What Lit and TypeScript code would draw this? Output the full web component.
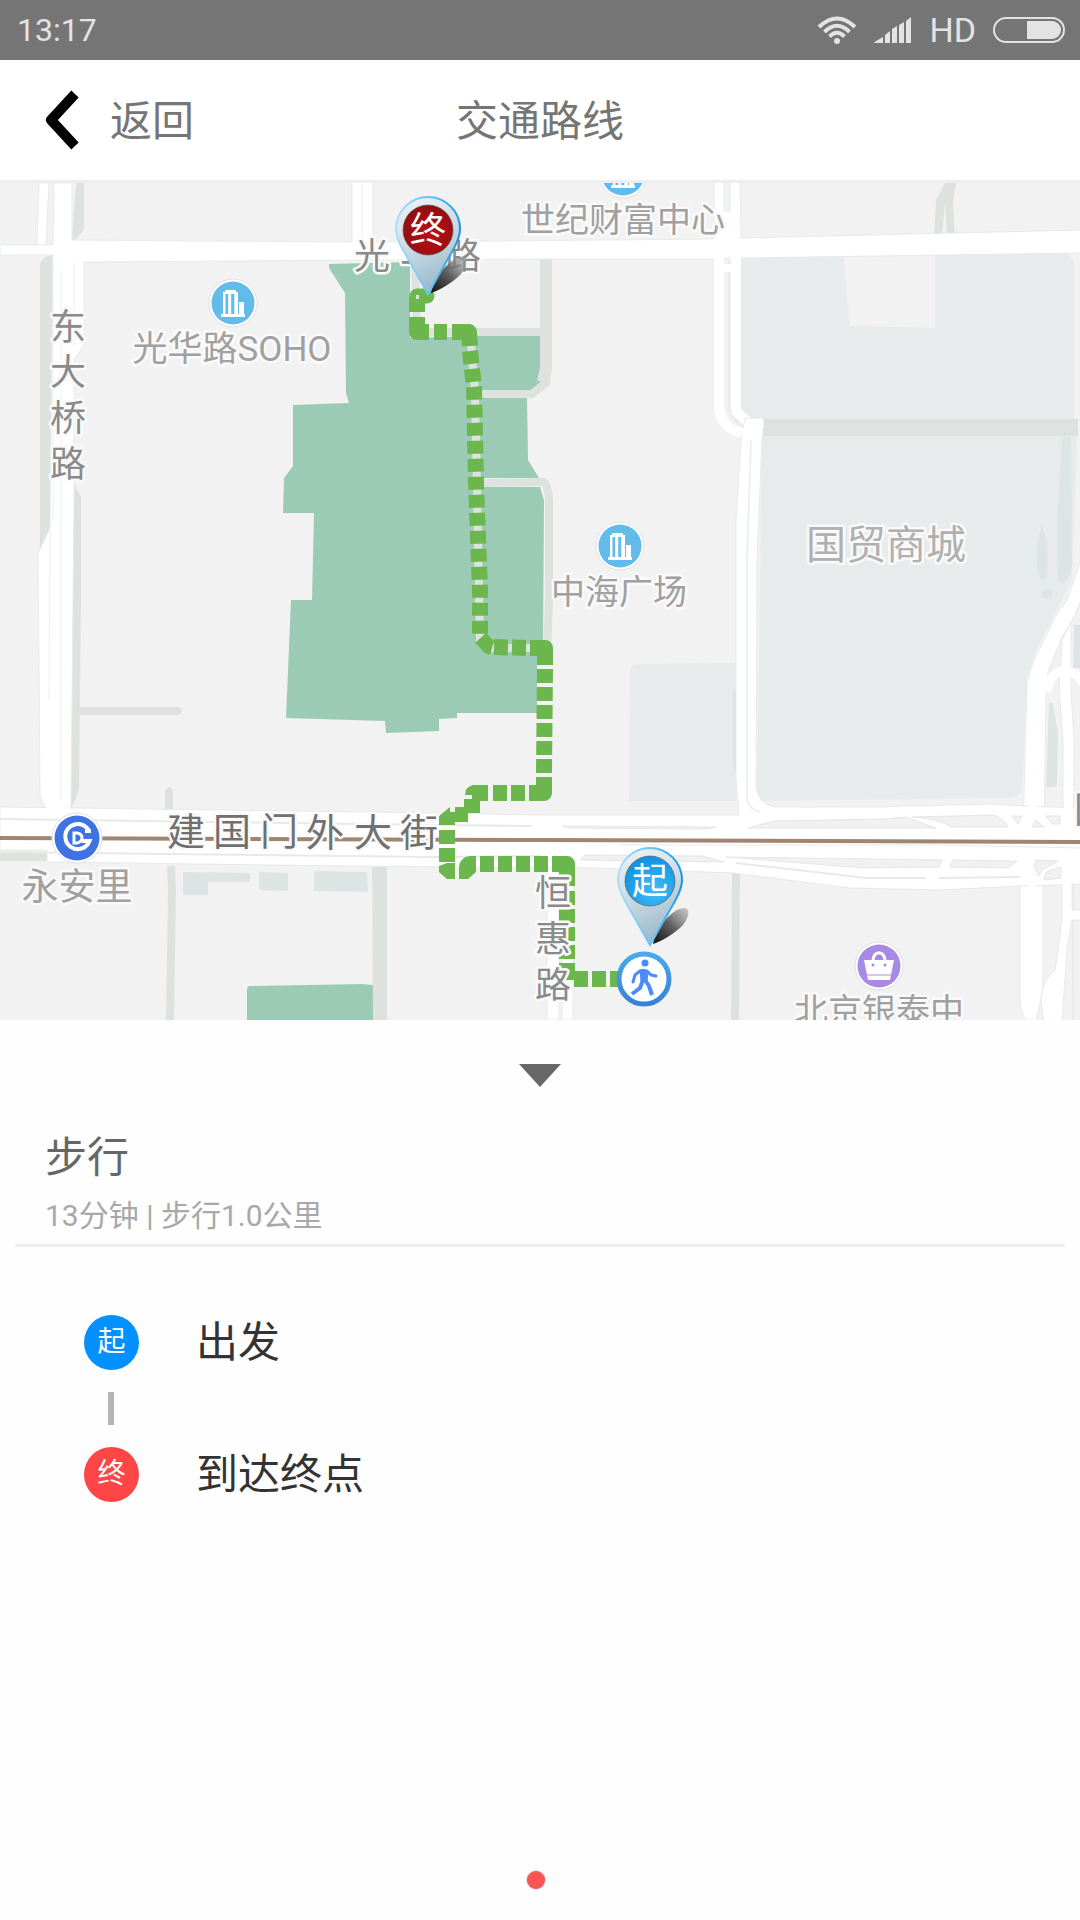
import { LitElement, html, svg, css } from "lit";
import { customElement, property } from "lit/decorators.js";

interface Glyph {
  char: string;
  x: number;
  y: number;
}

interface Step {
  kind: "start" | "end";
  mark: string;
  text: string;
}

const AVENUE: Glyph[] = [
  { char: "建", x: 186, y: 845 },
  { char: "国", x: 232, y: 845 },
  { char: "门", x: 279, y: 845 },
  { char: "外", x: 325, y: 846 },
  { char: "大", x: 373, y: 846 },
  { char: "街", x: 419, y: 846 },
];

const STREETS: Glyph[] = [
  { char: "东", x: 68, y: 340 },
  { char: "大", x: 68, y: 385 },
  { char: "桥", x: 68, y: 431 },
  { char: "路", x: 68, y: 477 },
  { char: "光", x: 372, y: 269 },
  { char: "华", x: 418, y: 269 },
  { char: "路", x: 463, y: 269 },
  { char: "恒", x: 553, y: 906 },
  { char: "惠", x: 553, y: 952 },
  { char: "路", x: 553, y: 998 },
];

const STEPS: Step[] = [
  { kind: "start", mark: "起", text: "出发" },
  { kind: "end", mark: "终", text: "到达终点" },
];

@customElement("status-bar")
export class StatusBar extends LitElement {
  static styles = css`
    :host {
      display: flex;
      align-items: center;
      height: 60px;
      padding: 0 15px 0 17px;
      background: #757575;
      color: #e3e3e3;
      font-family: Roboto, "Noto Sans CJK SC", sans-serif;
    }
    .time {
      flex: 1;
      font-size: 32px;
      line-height: 62px;
    }
    .icons {
      display: flex;
      align-items: center;
      gap: 17px;
    }
    .hd {
      font-size: 34px;
      line-height: 60px;
    }
    svg {
      display: block;
    }
  `;

  render() {
    return html`
      <span class="time">13:17</span>
      <div class="icons">
        <svg width="40" height="28" viewBox="0 0 40 28" fill="none" stroke="#e3e3e3" stroke-width="4">
          <path d="M2 11 Q20 -6 38 11" />
          <path d="M7.500 16 Q20 3.500 32.500 16" />
          <path d="M12.500 20.500 Q20 13 27.500 20.500" />
          <circle cx="20" cy="25" r="3" fill="#e3e3e3" stroke="none" />
        </svg>
        <svg width="38" height="26" viewBox="0 0 38 26" fill="#e3e3e3">
          <path d="M0 26 Q0 25 9 20 V26Z M11 18 L16 14 V26 H11Z M18 12 L23 9 V26 H18Z M25 8 L30 5 V26 H25Z M32 4 L37 0 V26 H32Z" />
        </svg>
        <span class="hd">HD</span>
        <svg width="72" height="26" viewBox="0 0 72 26">
          <rect x="1" y="1" width="70" height="24" rx="12" fill="none" stroke="#e3e3e3" stroke-width="2" />
          <path d="M34 4 H59 A9 9 0 0 1 59 22 H34Z" fill="#e3e3e3" />
        </svg>
      </div>
    `;
  }
}

@customElement("title-bar")
export class TitleBar extends LitElement {
  @property() heading = "";

  static styles = css`
    :host {
      display: grid;
      grid-template-columns: 1fr auto 1fr;
      align-items: center;
      height: 120px;
      background: #fff;
      border-bottom: 3px solid #eee;
      color: #757575;
    }
    .back {
      display: flex;
      align-items: center;
      gap: 27px;
      justify-self: start;
      padding: 0 24px 0 43px;
      border: 0;
      background: none;
      color: inherit;
      font: inherit;
    }
    .text {
      margin: 0;
      padding-top: 4px;
      font-size: 42px;
      font-weight: 400;
      line-height: 60px;
    }
    svg {
      display: block;
    }
  `;

  render() {
    return html`
      <button class="back" type="button">
        <svg width="40" height="64" viewBox="0 0 40 64" fill="none">
          <path d="M32 6 L8 32 L32 58" stroke="#000" stroke-width="10" stroke-linejoin="round" />
        </svg>
        <span class="text">返回</span>
      </button>
      <h1 class="text">${this.heading}</h1>
    `;
  }
}

@customElement("route-map")
export class RouteMap extends LitElement {
  static styles = css`
    :host {
      display: block;
      background: #f2f2f2;
    }
    .map {
      display: block;
      width: 100%;
      height: auto;
    }
    .path {
      fill: #dee2de;
    }
    .lane {
      fill: none;
      stroke: #dee2de;
    }
    .park {
      fill: #9bcbb4;
    }
    .block {
      fill: #e8ebeb;
    }
    .water {
      fill: #dde5e4;
    }
    .land {
      fill: #f2f2f2;
    }
    .road {
      fill: #fff;
      stroke: #e4ebe8;
      stroke-width: 1;
    }
    .way {
      fill: none;
      stroke: #fff;
    }
    .seam {
      fill: none;
      stroke: #e6ebe7;
      stroke-width: 2;
    }
    .gap {
      fill: #f0f1f0;
      stroke: #e3e8e4;
      stroke-width: 1;
    }
    .subway {
      fill: none;
      stroke: #9f8672;
      stroke-width: 4;
    }
    .route {
      fill: none;
      stroke: #6cb74d;
      stroke-width: 16;
    }
    .dashed {
      stroke-dasharray: 14 4;
    }
    .fill {
      fill: #6cb74d;
    }
    .label {
      font-family: Roboto, "Noto Sans CJK SC", sans-serif;
      font-size: 34px;
      text-anchor: middle;
      fill: #a0a0a0;
      stroke: #fafafa;
      stroke-width: 5px;
      stroke-linejoin: round;
      paint-order: stroke;
    }
    .street {
      font-size: 36px;
      fill: #8a8a8a;
    }
    .avenue {
      font-size: 38px;
      fill: #707070;
    }
    .wide {
      font-size: 35px;
    }
    .station {
      font-size: 37px;
    }
    .mall {
      font-size: 40px;
      fill: #b0b0b0;
    }
    .pin-text {
      font-family: "Noto Sans CJK SC", sans-serif;
      font-size: 36px;
      text-anchor: middle;
      fill: #fff;
    }
  `;

  private glyph(g: Glyph, kind: string) {
    return svg`<text class="label ${kind}" x=${g.x} y=${g.y}>${g.char}</text>`;
  }

  private office(x: number, y: number) {
    return svg`
      <g transform="translate(${x} ${y})">
        <circle r="24" fill="#fff" stroke="#dfe3e5" stroke-width="1" />
        <circle r="21.500" fill="#63bbe9" />
        <path fill="#fff" d="M-8 -13 H3 V-11 H5 V11 H6 V-1 H11 V11 H12 V14 H-12 V11 H-10 V-11 H-8Z" />
        <path fill="#63bbe9" d="M-7.500 -9 H-4.800 V11 H-7.500Z M-1.800 -9 H1.300 V11 H-1.800Z" />
      </g>`;
  }

  private pin(x: number, y: number, mark: string, face: string) {
    return svg`
      <g transform="translate(${x} ${y})">
        <path fill="url(#shade)" d="M3 -1 C5 -14 20 -36 34 -37 C42 -37 38 -24 30 -17 C22 -10 12 -4 3 -1Z" />
        <path
          fill="url(#shell)" stroke="url(#rim)" stroke-width="2"
          d="M0 0 L-25 -44 C-30 -53 -32 -58 -32 -65 A32 32 0 0 1 32 -65 C32 -58 30 -53 25 -44Z" />
        <circle cy="-64" r="25" fill=${face} stroke="#4a5560" stroke-opacity="0.6" />
        <text class="pin-text" y="-51">${mark}</text>
      </g>`;
  }

  render() {
    return html`
      <svg class="map" viewBox="0 183 1080 837" role="img" aria-label="步行路线地图">
        <defs>
          <linearGradient id="shell" x1="0" y1="0" x2="0.300" y2="1">
            <stop offset="0" stop-color="#f0f4f5" />
            <stop offset="0.500" stop-color="#cfdde5" />
            <stop offset="1" stop-color="#9dbbce" />
          </linearGradient>
          <linearGradient id="rim" x1="0" x2="1">
            <stop offset="0" stop-color="#a9defa" />
            <stop offset="0.600" stop-color="#5dbdf2" />
            <stop offset="1" stop-color="#1595e2" />
          </linearGradient>
          <linearGradient id="shade" x1="0" y1="1" x2="1" y2="0">
            <stop offset="0" stop-color="#111" />
            <stop offset="0.500" stop-color="#555" stop-opacity="0.950" />
            <stop offset="1" stop-color="#aaa" stop-opacity="0.600" />
          </linearGradient>
          <radialGradient id="blue-face" cx="0.600" cy="0.700" r="0.700">
            <stop offset="0" stop-color="#43bdf5" />
            <stop offset="1" stop-color="#1191df" />
          </radialGradient>
          <radialGradient id="red-face" cx="0.550" cy="0.600" r="0.700">
            <stop offset="0" stop-color="#b81014" />
            <stop offset="1" stop-color="#8d0d10" />
          </radialGradient>
          <linearGradient id="ring" x1="0" y1="0" x2="0" y2="1">
            <stop offset="0" stop-color="#4aa9ea" />
            <stop offset="1" stop-color="#3a80d6" />
          </linearGradient>
        </defs>

        <g class="block">
          <path d="M741 256 L1068 252 L1074 262 V420 H747 L741 410Z" />
          <path d="M762 436 H1077 L1072 580 L1036 650 L1027 677 L1022 790 Q1020 798 1006 798 L757 801Z" />
          <path d="M630 670 Q631 664 638 664 L736 663 V801 H629Z" />
        </g>
        <path class="land" d="M843 256 L850 326 L935 328 V254Z" />
        <g class="water">
          <path d="M1062 437 H1071 L1072 567 Q1068 582 1063 583 L1058 580 L1057 527Z" />
          <path d="M1042 525 Q1050 545 1047 577 Q1043 583 1039 577 Q1033 552 1042 525Z" />
          <circle cx="1047" cy="594" r="5" />
          <path d="M1049 703 H1053 L1058 733 L1057 785 L1054 787 H1046Z" />
          <path d="M1074 625 H1080 V668 H1073Z" />
          <path d="M183 873 Q183 872 186 872 L250 873 V882 H208 V895 H183Z" />
          <path d="M259 872 L288 873 V891 L259 890Z" />
          <path d="M314 871 L367 872 L368 892 L314 891Z" />
        </g>

        <g class="park">
          <path d="M329 264 L410 262 V338 L475 336 H542 V381 L530 391 H483 V398 H527 L528 460 L539 478 H484 V487 H540 L544 500 L543 650 L537 662 V713 H457 V718 L439 719 V731 L386 733 L385 721 L286 718 L291 600 H312 L314 513 H283 L284 478 L293 466 V405 L349 403 L346 393 L345 293 L329 268Z" />
          <path d="M247 990 Q247 986 250 986 L362 984 L373 985 V1020 H247Z" />
        </g>

        <g class="path">
          <path d="M76 183 H84 V228 Q84 232 72 242Z" />
          <path d="M40 553 V266 Q41 256 52 255 V540Z" />
          <path d="M73 483 L81 497 V600 L79 790 L71 810 V500Z" />
          <path d="M72 707 H178 Q186 711 178 715 H72Z" />
          <path d="M165 811 V791 Q169 783 173 791 V811Z" />
          <path d="M167 866 H175 L176 890 L174 1020 H166 L168 890Z" />
          <path d="M372 867 H387 V1020 H373Z" />
          <path d="M732 873 H740 L739 1020 H731Z" />
          <path d="M0 852 H47 V861 H0Z" />
          <path d="M762 419 H1078 V436 H762Z" />
          <path d="M733 690 H737 V773 Q733 770 733 760Z" />
          <path d="M945 183 H956 L953 203 L955 238 H934 L936 200Z" />
        </g>
        <path class="land" d="M945 204 L947 236 H942Z" />
        <path d="M762 427 H1078" stroke="#e6eae7" stroke-width="1" />
        <g class="lane">
          <path stroke-width="8" d="M415 258 L417 332 H470 L475 393 L480 640 L490 648 H545" />
          <path stroke-width="8" d="M474 332 H548" />
          <path stroke-width="12" d="M546 259 V368 L543 382" />
          <path stroke-width="8" d="M548 366 L546 383 L532 394 H482" />
          <path stroke-width="8" d="M482 483 L544 482 Q548 484 549 500 V600 L547 655" />
        </g>

        <g class="road">
          <path d="M39 183 H49 L46 246 H37Z" />
          <path d="M0 245 H53 L54 183 H72 V240 L352 242 V182 H373 V242 L714 239 V182 H724 V211 H730 V182 H740 L741 238 L1081 230 V253 L741 258 V262 H730 V258 H724 V259 L540 259 L84 262 V345 L74 360 V500 L71 810 H46 L40 795 L38 553 L50 528 L53 255 H0Z" />
          <path d="M1067 600 L1081 560 V600 L1074 617 L1062 637 L1048 672 L1046 700 L1044 830 H1023 L1027 683 L1034 660 L1055 617Z" />
          <path d="M1062 640 L1071 622 V690 L1074 740 L1073 1020 L1073 830 H1063 L1063 740 L1059 690Z" />
          <path d="M1020 880 H1043 V990 L1036 1020 H1025 L1020 1005Z" />
          <path d="M1062 880 H1072 V910 H1081 V920 H1072 L1067 950 L1062 1021 H1044 L1041 1000 Q1043 977 1055 971 L1062 920Z" />
          <path d="M547 866 H559 V1020 H547Z M562 866 H573 V1020 H562Z" />
        </g>
        <path class="way" stroke-width="9" d="M1047 692 Q1050 671 1066 671 Q1076 671 1084 684" />
        <g class="seam">
          <path stroke-width="1" d="M50 530 L49 700 M61 270 V800 M74 262 V345 M362 184 V240 M53 262 V520" opacity="0.700" />
          <path d="M729 262 V405 Q730 418 744 428" />
        </g>
        <g class="way">
          <path stroke-width="10" d="M719 240 V405 Q720 430 745 433" />
          <path stroke-width="10" d="M736 240 V411 L752 426" />
          <path stroke-width="8" d="M716 216 H740 M716 268 H740" />
        </g>
        <path class="road" d="M745 418 H762 Q764 418 764 423 L762 440 L757 560 L756 785 Q757 803 774 807 H884 L902 806 L995 804 L1023 806 L1081 808 V884 L1020 886 L940 890 L850 888 L733 873 L600 868 L439 867 L270 865 L47 862 V850 H0 V807 L439 813 L540 815 H739 L736 780 L736 520 L741 440Z" />
        <path class="way" stroke-width="8" d="M742 432 L752 432 M1033 800 V812 M1068 800 V812 M1032 880 V892 M1067 878 V892 M48 804 L68 812 M553 864 H560 M568 864 V870" />
        <path class="seam" stroke-width="1" d="M751 440 L747 560 V800 Q750 810 760 812" opacity="0.700" />
        <g class="gap">
          <path d="M562 826 L716 827 L706 829 L568 828Z" />
          <path d="M748 828 L774 821 L884 819 L905 817 L936 828Z" />
          <path d="M912 817 L993 815 Q1004 818 1008 827 H952 Q936 818 912 817Z" />
          <path d="M1012 816 H1022 L1018 824Z M1046 816 H1060 V824 H1052Z M1036 820 L1044 827 H1032Z" />
          <path d="M585 855 L702 856 L724 862 L580 860Z" />
          <path d="M726 857 L942 860 L939 867 L864 868Z" />
          <path d="M953 860 L1017 861 L1008 868 L950 867Z" />
          <path d="M1036 860 L1058 861 L1042 870 L1039 876 L1034 866Z" />
          <path d="M1046 872 L1061 867 V878 L1044 880Z" />
        </g>
        <g class="seam">
          <path d="M0 819 L438 825 L532 826" />
          <path d="M0 852 L170 854 L438 857 L540 856" />
          <path d="M736 863 L867 878 L926 878 M939 878 L1020 877" />
          <path stroke-width="1" d="M620 845 L940 845 L1080 848" />
        </g>
        <path class="subway" d="M0 838 L540 840 L1080 842" />

        <g class="route">
          <path stroke-width="15" stroke-linecap="round" d="M417 296 H427" />
          <path d="M417 297 V312" />
          <path stroke-linejoin="round" d="M417 317 V332 H429" />
          <path d="M434 332 H447" />
          <path stroke-linejoin="round" d="M452 332 H469 L470 346" />
          <path stroke-dasharray="13 5" d="M470 351 L474 387 L476 483 L480 592 V634" />
          <path class="dashed" d="M494 647 L527 648" />
          <path stroke-linejoin="round" d="M530 648 H545 V665" />
          <path class="dashed" d="M545 669 L544 773" />
          <path stroke-linejoin="round" d="M544 777 V793 H529" />
          <path class="dashed" d="M525 793 H493" />
          <path d="M488 793 H472" />
          <path d="M472 799 V813" />
          <path class="dashed" d="M447 830 V862" />
          <path class="dashed" d="M480 864 H548" />
          <path stroke-linejoin="round" d="M552 864 H567 V886" />
          <path class="dashed" d="M567 891 V960" />
          <path d="M567 963 V980" />
          <path class="dashed" d="M574 979 H620" />
        </g>
        <g class="fill">
          <path d="M486 633 L494 641 L490 655 L485 653 L475 643Z" />
          <path d="M473 785 Q465 787 465 795 H473Z" />
          <path d="M455 807 H468 V822 H455Z" />
          <path d="M450 807 V812 H455 V825 H439 V816Z" />
          <path d="M439 866 L447 863 H455 V879 H447 L439 872Z" />
          <path d="M459 879 V867 Q460 857 470 856 H476 V872 L468 879Z" />
        </g>
        <rect x="416" y="295" width="3" height="4" fill="#dee2de" />

        ${this.office(233, 303)} ${this.office(620, 546)} ${this.office(623, 174)}
        <text class="label wide" x="232" y="361">光华路SOHO</text>
        <text class="label" x="623" y="232">世纪财富中心</text>
        <text class="label" x="619" y="604">中海广场</text>
        <text class="label mall" x="886" y="559">国贸商城</text>
        <text class="label station" x="77" y="900">永安里</text>
        <text class="label" x="879" y="1023">北京银泰中</text>
        <text class="label street" x="1092" y="823">国</text>
        ${AVENUE.map((g) => this.glyph(g, "avenue"))}
        ${STREETS.map((g) => this.glyph(g, "street"))}

        <g transform="translate(77 838)">
          <circle r="25" fill="#fff" stroke="#dfe3e5" />
          <circle r="22.500" fill="#3f73e2" />
          <path d="M12 -7 A12.500 12.500 0 1 0 12.500 3 H5" fill="none" stroke="#fff" stroke-width="4" />
          <path d="M8 -7 H14" stroke="#fff" stroke-width="4" />
          <path d="M-3 -5 V5 H0 Q5 4 5 0 Q5 -4 0 -5Z" fill="none" stroke="#fff" stroke-width="3" />
        </g>

        <g transform="translate(879 966)">
          <circle r="24" fill="#fff" stroke="#dfe0e5" />
          <circle r="21.500" fill="#a989e6" />
          <path d="M-6 -5 C-6 -16 6 -16 6 -5" fill="none" stroke="#fff" stroke-width="3" />
          <path d="M-15 -6 H15 L11 14 H-11Z" fill="#fff" />
          <path d="M-13 9 H13" stroke="#a989e6" stroke-width="1" />
          <circle cx="-6" cy="-1" r="1.500" fill="#a989e6" />
          <circle cx="6" cy="-1" r="1.500" fill="#a989e6" />
        </g>

        <g transform="translate(644 979)">
          <circle r="25" fill="#fff" stroke="url(#ring)" stroke-width="5" />
          <circle cx="1" cy="-16" r="3.500" fill="#4a8cff" />
          <path d="M-4 -9 Q0 -11 4 -8 L3 3 L-3 2Z" fill="#4a8cff" stroke="#4a8cff" stroke-width="1" stroke-linejoin="round" />
          <path
            fill="none" stroke="#4a8cff" stroke-width="3" stroke-linecap="round" stroke-linejoin="round"
            d="M-4 -8 L-9 -4 L-11 3 M3 -8 L7 -4 L12 -3" />
          <path
            fill="none" stroke="#4a8cff" stroke-width="4" stroke-linejoin="round"
            d="M-1 1 L-4 9 L-12 15 M1 1 L5 7 L8 16" />
        </g>

        ${this.pin(428, 294, "终", "url(#red-face)")}
        ${this.pin(650, 945, "起", "url(#blue-face)")}
      </svg>
    `;
  }
}

@customElement("route-summary")
export class RouteSummary extends LitElement {
  @property() mode = "";
  @property() detail = "";

  static styles = css`
    :host {
      display: block;
      padding: 0 15px;
    }
    .toggle {
      display: block;
      margin: 0 auto;
      padding: 44px 24px 42px;
      border: 0;
      background: none;
    }
    .toggle svg {
      display: block;
    }
    .box {
      padding: 0 30px 6px;
      border-bottom: 3px solid #eee;
    }
    .mode {
      margin: 0;
      color: #666;
      font-size: 42px;
      font-weight: 400;
      line-height: 56px;
    }
    .detail {
      margin: 0;
      color: #a8a8a8;
      font-size: 30px;
      line-height: 44px;
      padding-top: 8px;
    }
  `;

  render() {
    return html`
      <button class="toggle" type="button" aria-label="展开">
        <svg width="42" height="24" viewBox="0 0 42 24"><path d="M0 0 H42 L21 23Z" fill="#686868" /></svg>
      </button>
      <div class="box">
        <h2 class="mode">${this.mode}</h2>
        <p class="detail">${this.detail}</p>
      </div>
    `;
  }
}

@customElement("route-steps")
export class RouteSteps extends LitElement {
  static styles = css`
    :host {
      display: block;
    }
    .list {
      display: flex;
      flex-direction: column;
      margin: 0;
      padding: 68px 84px;
      list-style: none;
    }
    .row {
      display: flex;
      align-items: center;
      gap: 57px;
      color: #333;
      font-size: 42px;
      line-height: 55px;
    }
    .mark {
      width: 55px;
      height: 55px;
      border-radius: 50%;
      color: #fff;
      font-size: 28px;
      line-height: 53px;
      text-align: center;
    }
    .start .mark {
      background: #0590ff;
    }
    .end .mark {
      background: #ff4646;
    }
    .end::before {
      content: "";
      display: block;
      width: 6px;
      height: 33px;
      margin: 22px 24px;
      background: #b5b5b5;
    }
  `;

  render() {
    return html`
      <ol class="list">
        ${STEPS.map(
          (s) => html`
            <li class=${s.kind}>
              <div class="row"><span class="mark">${s.mark}</span><span>${s.text}</span></div>
            </li>
          `
        )}
      </ol>
    `;
  }
}

@customElement("app-root")
export class AppRoot extends LitElement {
  static styles = css`
    :host {
      display: flex;
      flex-direction: column;
      min-height: 100vh;
      background: #fefefe;
      font-family: Roboto, "Noto Sans CJK SC", sans-serif;
    }
    .pager {
      display: flex;
      justify-content: center;
      margin-top: auto;
      padding: 0 8px 31px 0;
    }
    .dot {
      width: 18px;
      height: 18px;
      border-radius: 50%;
      background: #f95555;
      box-shadow: 0 0 2px #999;
    }
  `;

  render() {
    return html`
      <status-bar></status-bar>
      <title-bar heading="交通路线"></title-bar>
      <route-map></route-map>
      <route-summary mode="步行" detail="13分钟 | 步行1.0公里"></route-summary>
      <route-steps></route-steps>
      <div class="pager"><span class="dot"></span></div>
    `;
  }
}
